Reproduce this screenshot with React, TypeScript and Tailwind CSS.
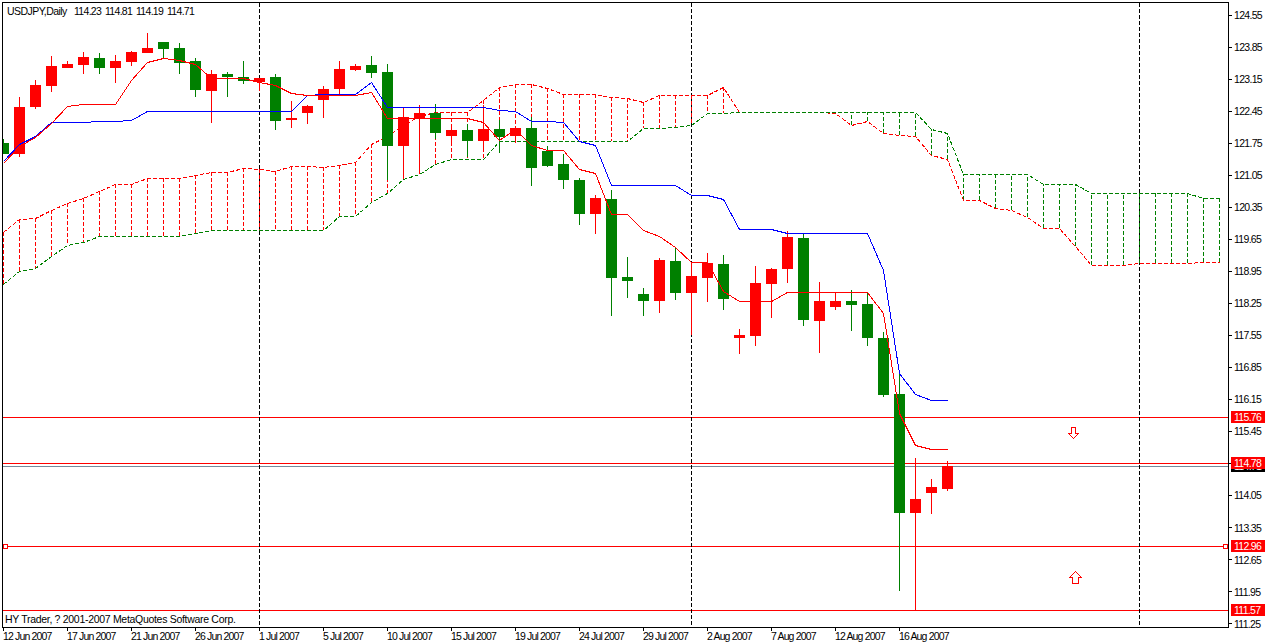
// USDJPY daily chart with Ichimoku lines, plain MT4 look

type Candle = [high: number, top: number, bottom: number, low: number, up: 0 | 1];

// one entry per bar, 16px apart, pixel rows in page coordinates
const CANDLES: Candle[] = [
  [139, 143, 154, 154, 1], [97, 107, 154, 157, 0], [80, 85, 107, 109, 0], [56, 66, 86, 92, 0],
  [61, 64, 68, 68, 0], [52, 57, 65, 74, 0], [53, 58, 68, 74, 1], [55, 61, 68, 83, 0],
  [51, 52, 62, 66, 0], [33, 48, 53, 53, 0], [42, 42, 49, 58, 1], [43, 48, 63, 74, 1],
  [58, 61, 90, 97, 1], [70, 74, 91, 123, 0], [72, 74, 77, 97, 1], [61, 77, 81, 84, 1],
  [78, 78, 82, 91, 0], [74, 77, 121, 130, 1], [101, 118, 120, 128, 0], [105, 106, 113, 124, 0],
  [86, 89, 100, 118, 0], [61, 69, 89, 94, 0], [64, 66, 70, 71, 0], [56, 65, 73, 78, 1],
  [64, 72, 146, 180, 1], [108, 117, 146, 179, 0], [105, 113, 118, 172, 0], [104, 113, 133, 139, 1],
  [125, 130, 136, 146, 0], [124, 130, 141, 157, 1], [105, 129, 141, 150, 0], [120, 129, 137, 153, 1],
  [128, 128, 136, 143, 0], [117, 128, 168, 186, 1], [146, 151, 166, 167, 1], [154, 164, 180, 189, 1],
  [178, 180, 214, 225, 1], [195, 198, 214, 234, 0], [190, 199, 278, 316, 1], [257, 277, 281, 298, 1],
  [288, 294, 301, 316, 1], [258, 260, 301, 313, 0], [247, 261, 293, 300, 1], [262, 276, 293, 335, 0],
  [253, 263, 278, 302, 0], [255, 264, 299, 310, 1], [329, 335, 338, 354, 0], [266, 283, 336, 346, 0],
  [268, 269, 284, 318, 0], [231, 237, 269, 283, 0], [233, 238, 320, 326, 1], [282, 301, 321, 353, 0],
  [292, 301, 307, 310, 0], [290, 301, 305, 331, 1], [292, 304, 338, 346, 1], [332, 338, 395, 397, 1],
  [373, 394, 513, 591, 1], [458, 499, 513, 610, 0], [479, 487, 493, 514, 0], [461, 466, 489, 491, 0],
];

const TENKAN = [
  163, 146, 137, 123, 106, 104, 104, 104, 80, 62, 58, 60, 64, 78, 78, 78, 82, 85, 93, 95,
  95, 95, 95, 92, 118, 118, 118, 118, 118, 118, 122, 140, 129, 145, 150, 150, 169, 173, 214, 214,
  230, 236, 247, 262, 262, 291, 301, 301, 301, 292, 292, 292, 292, 292, 292, 313, 413, 445, 449, 449,
];

const KIJUN = [
  161, 144, 136, 122, 122, 122, 121, 121, 120, 111, 111, 111, 111, 111, 111, 111, 111, 111, 111, 95,
  94, 94, 94, 82, 107, 107, 107, 107, 107, 107, 107, 110, 111, 121, 121, 122, 141, 145, 185, 185,
  185, 185, 185, 195, 195, 199, 229, 229, 229, 233, 233, 233, 233, 233, 233, 270, 373, 394, 400, 400,
];

// the cloud runs 17 bars past the last candle
const SPAN_RED = [
  232, 219, 218, 210, 203, 198, 191, 184, 184, 178, 178, 178, 175, 172, 172, 168, 169, 171, 166, 166,
  167, 165, 162, 144, 136, 125, 116, 112, 112, 112, 100, 87, 84, 84, 88, 94, 94, 94, 97, 98,
  102, 95, 95, 95, 95, 87, 112, 112, 112, 112, 112, 112, 113, 125, 121, 133, 135, 136, 155, 159,
  200, 200, 208, 210, 217, 228, 228, 246, 265, 265, 265, 263, 263, 263, 263, 262, 262,
];

const SPAN_GREEN = [
  284, 271, 268, 256, 245, 242, 236, 236, 236, 236, 236, 236, 233, 230, 230, 230, 230, 230, 230, 230,
  230, 216, 216, 202, 193, 179, 174, 164, 159, 159, 159, 141, 141, 141, 141, 141, 141, 141, 141, 141,
  128, 128, 127, 125, 113, 113, 112, 112, 112, 112, 112, 112, 112, 112, 112, 112, 112, 112, 129, 133,
  174, 174, 174, 174, 174, 184, 184, 184, 193, 193, 193, 193, 193, 193, 193, 198, 198,
];

const PRICE_TICKS = [
  '124.55', '123.85', '123.15', '122.45', '121.75', '121.05', '120.35', '119.65', '118.95', '118.25',
  '117.55', '116.85', '116.15', '115.45', '114.75', '114.05', '113.35', '112.65', '111.95', '111.25',
];

const DATE_TICKS = [
  '12 Jun 2007', '17 Jun 2007', '21 Jun 2007', '26 Jun 2007', '1 Jul 2007', '5 Jul 2007', '10 Jul 2007',
  '15 Jul 2007', '19 Jul 2007', '24 Jul 2007', '29 Jul 2007', '2 Aug 2007', '7 Aug 2007', '12 Aug 2007',
  '16 Aug 2007',
];

const H_LINES = [417, 463, 546, 610];
const V_LINES = [259, 691, 1139];

const PRICE_TAGS = [
  { label: '114.71', top: 458, black: true },
  { label: '115.76', top: 409, black: false },
  { label: '114.78', top: 455, black: false },
  { label: '112.96', top: 538, black: false },
  { label: '111.57', top: 602, black: false },
];

const barX = (i: number) => 3 + 16 * i;

const toPoints = (values: number[]) =>
  values.map((y, i) => `${barX(i) + 0.5},${y + 0.5}`).join(' ');

function ChartDrawing() {
  return (
    <svg
      className="absolute inset-0"
      width={1225}
      height={624}
      viewBox="3 3 1225 624"
      shapeRendering="crispEdges"
      fill="none"
    >
      {/* horizontal levels */}
      {H_LINES.map((y) => (
        <line key={y} x1={3} x2={1228} y1={y + 0.5} y2={y + 0.5} stroke="#ff0000" />
      ))}
      <line x1={3} x2={1228} y1={466.5} y2={466.5} stroke="#778899" />

      {/* period separators */}
      {V_LINES.map((x) => (
        <line key={x} x1={x + 0.5} x2={x + 0.5} y1={3} y2={627} stroke="#000000" strokeDasharray="4 2" />
      ))}

      {/* cloud hatching */}
      {SPAN_RED.map((red, i) => {
        const green = SPAN_GREEN[i];
        if (red === green) return null;
        return (
          <line
            key={i}
            x1={barX(i) + 0.5}
            x2={barX(i) + 0.5}
            y1={red}
            y2={green}
            stroke={red < green ? '#ff0000' : '#008000'}
            strokeDasharray="4 2"
          />
        );
      })}
      <polyline points={toPoints(SPAN_RED)} stroke="#ff0000" strokeDasharray="4 2" />
      <polyline points={toPoints(SPAN_GREEN)} stroke="#008000" strokeDasharray="4 2" />

      {/* candles */}
      {CANDLES.map(([high, top, bottom, low, up], i) => {
        const color = up ? '#008000' : '#ff0000';
        const x = barX(i);
        return (
          <g key={i} fill={color}>
            <rect x={x} y={high} width={1} height={low - high} />
            <rect x={x - 5} y={top} width={11} height={bottom - top} />
          </g>
        );
      })}

      <polyline points={toPoints(KIJUN)} stroke="#0000ff" />
      <polyline points={toPoints(TENKAN)} stroke="#ff0000" />

      {/* line handles */}
      <rect x={3.5} y={544.5} width={4} height={4} fill="#ffffff" stroke="#ff0000" />
      <rect x={1223.5} y={544.5} width={4} height={4} fill="#ffffff" stroke="#ff0000" />

      {/* sell / buy arrows */}
      <polygon
        points="1071.5,427.5 1075.5,427.5 1075.5,433.5 1078.5,433.5 1073.5,438.5 1068.5,433.5 1071.5,433.5"
        stroke="#ff0000"
      />
      <polygon
        points="1072.5,583.5 1078.5,583.5 1078.5,577.5 1081.5,577.5 1075.5,571.5 1069.5,577.5 1072.5,577.5"
        stroke="#ff0000"
      />
    </svg>
  );
}

function PriceAxis() {
  return (
    <div className="relative h-[626px] w-[37px] flex-none">
      <div className="-mt-[3px] flex flex-col">
        {PRICE_TICKS.map((price) => (
          <div key={price} className="flex h-[32.05px] flex-none items-center">
            <div className="h-px w-[3px] bg-black" />
            <span className="ml-[2px] text-[10.5px] leading-none tracking-[-0.7px] text-black">{price}</span>
          </div>
        ))}
      </div>
      {PRICE_TAGS.map((tag) => (
        <div
          key={tag.label}
          className={`absolute left-[2px] flex h-[12px] w-[34px] items-center pl-[3px] text-[10.5px] leading-none tracking-[-0.7px] text-white ${
            tag.black ? 'bg-black' : 'bg-[#ff0000]'
          }`}
          style={{ top: tag.top }}
        >
          {tag.label}
        </div>
      ))}
    </div>
  );
}

function DateAxis() {
  return (
    <div className="flex pl-[3px]">
      {DATE_TICKS.map((date) => (
        <div key={date} className="flex w-16 flex-none flex-col">
          <div className="h-[3px] w-px bg-black" />
          <span className="whitespace-nowrap text-[10.5px] leading-[11px] tracking-[-0.85px] text-black">
            {date}
          </span>
        </div>
      ))}
    </div>
  );
}

export default function App() {
  return (
    <div className="h-[644px] w-[1266px] overflow-hidden bg-white pl-[2px] pt-[2px] font-['Liberation_Sans',sans-serif]">
      <div className="flex h-[626px]">
        <div className="relative h-[626px] w-[1227px] flex-none overflow-hidden border border-black">
          <ChartDrawing />
          <div className="absolute left-[4px] top-[3px] flex whitespace-pre text-[10.5px] leading-none tracking-[-0.55px] text-black">
            <span className="w-[67px] flex-none">USDJPY,Daily</span>
            <span className="w-[31px] flex-none tracking-[-0.7px]">114.23</span>
            <span className="w-[31px] flex-none tracking-[-0.7px]">114.81</span>
            <span className="w-[31px] flex-none tracking-[-0.7px]">114.19</span>
            <span className="flex-none tracking-[-0.7px]">114.71</span>
          </div>
          <div className="absolute bottom-[3px] left-[2px] whitespace-pre text-[10.5px] leading-none tracking-[-0.3px] text-black">
            HY Trader, ? 2001-2007 MetaQuotes Software Corp.
          </div>
        </div>
        <PriceAxis />
      </div>
      <div className="-ml-[2px]">
        <DateAxis />
      </div>
    </div>
  );
}
